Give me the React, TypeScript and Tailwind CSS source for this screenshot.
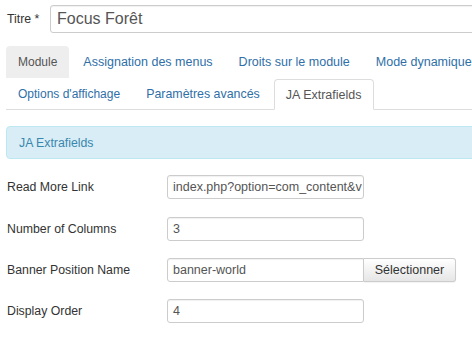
import React from "react";

const linkCls = "text-[#2f6fa8]";

function Tab({ label, active, muted, size }: { label: string; active?: boolean; muted?: boolean; size: string }) {
  if (active) {
    return (
      <div className={`mr-[2px] px-[11px] h-full flex items-center border border-[#ddd] border-b-white rounded-t-[4px] bg-white text-[#555] relative top-[1px] whitespace-nowrap ${size}`}>
        {label}
      </div>
    );
  }
  if (muted) {
    return (
      <div className={`mr-[2px] px-[12px] h-full flex items-center rounded-t-[4px] bg-[#eee] text-[#555] whitespace-nowrap ${size}`}>
        {label}
      </div>
    );
  }
  return (
    <div className={`mr-[2px] px-[12px] h-full flex items-center whitespace-nowrap ${linkCls} ${size}`}>{label}</div>
  );
}

function Field({ label, value, button, mt }: { label: string; value: string; button?: boolean; mt: string }) {
  return (
    <div className={`flex items-center h-[24px] ${mt}`}>
      <div className="w-[161px] pl-[1px] text-[#333] text-[12.3px] whitespace-nowrap">{label}</div>
      <div
        className={`w-[197px] h-full border border-[#ccc] bg-white flex items-center px-[5px] text-[#555] text-[12.5px] whitespace-nowrap overflow-hidden ${
          button ? "rounded-l-[3px]" : "rounded-[3px]"
        } shadow-[inset_0_1px_1px_rgba(0,0,0,0.06)]`}
      >
        {value}
      </div>
      {button && (
        <div className="w-[92px] h-full border border-[#ccc] border-l-0 rounded-r-[3px] bg-gradient-to-b from-white to-[#e6e6e6] flex items-center justify-center text-[#333] text-[12.5px] shadow-[0_1px_1px_rgba(0,0,0,0.05)]">
          Sélectionner
        </div>
      )}
    </div>
  );
}

export default function App() {
  return (
    <div className="w-[472px] h-[357px] overflow-hidden bg-white font-['Liberation_Sans',Arial,sans-serif] text-[12px] leading-[18px] text-[#333]">
      <div className="w-[600px] pl-[6px] pt-[5px]">
        {/* Titre */}
        <div className="flex items-center h-[28px]">
          <div className="w-[44px] pl-[1px] text-[#333] text-[12.3px] whitespace-nowrap">Titre *</div>
          <div className="flex-1 h-full border border-[#ccc] rounded-[3px] flex items-center pl-[6px] text-[16px] text-[#555] shadow-[inset_0_1px_1px_rgba(0,0,0,0.06)]">
            Focus Forêt
          </div>
        </div>

        {/* Tabs */}
        <div className="mt-[13px] border-b border-[#ddd]">
          <div className="flex h-[32px]">
            <Tab label="Module" muted size="text-[12px]" />
            <Tab label="Assignation des menus" size="text-[12.5px]" />
            <Tab label="Droits sur le module" size="text-[12.5px]" />
            <Tab label="Mode dynamique" size="text-[12.5px]" />
          </div>
          <div className="flex h-[31px]">
            <Tab label="Options d'affichage" size="text-[12px]" />
            <Tab label="Paramètres avancés" size="text-[12.4px]" />
            <Tab label="JA Extrafields" active size="text-[12.5px]" />
          </div>
        </div>

        {/* Alert */}
        <div className="mt-[16px] h-[33px] border border-[#bce8f1] bg-[#d9edf7] rounded-[4px] flex items-center pl-[12px] text-[#3a87ad] text-[12.3px]">
          JA Extrafields
        </div>

        {/* Fields */}
        <div className="mt-[16px] flex flex-col">
          <Field mt="mt-0" label="Read More Link" value="index.php?option=com_content&v" />
          <Field mt="mt-[18px]" label="Number of Columns" value="3" />
          <Field mt="mt-[17px]" label="Banner Position Name" value="banner-world" button />
          <Field mt="mt-[17px]" label="Display Order" value="4" />
        </div>
      </div>
    </div>
  );
}
